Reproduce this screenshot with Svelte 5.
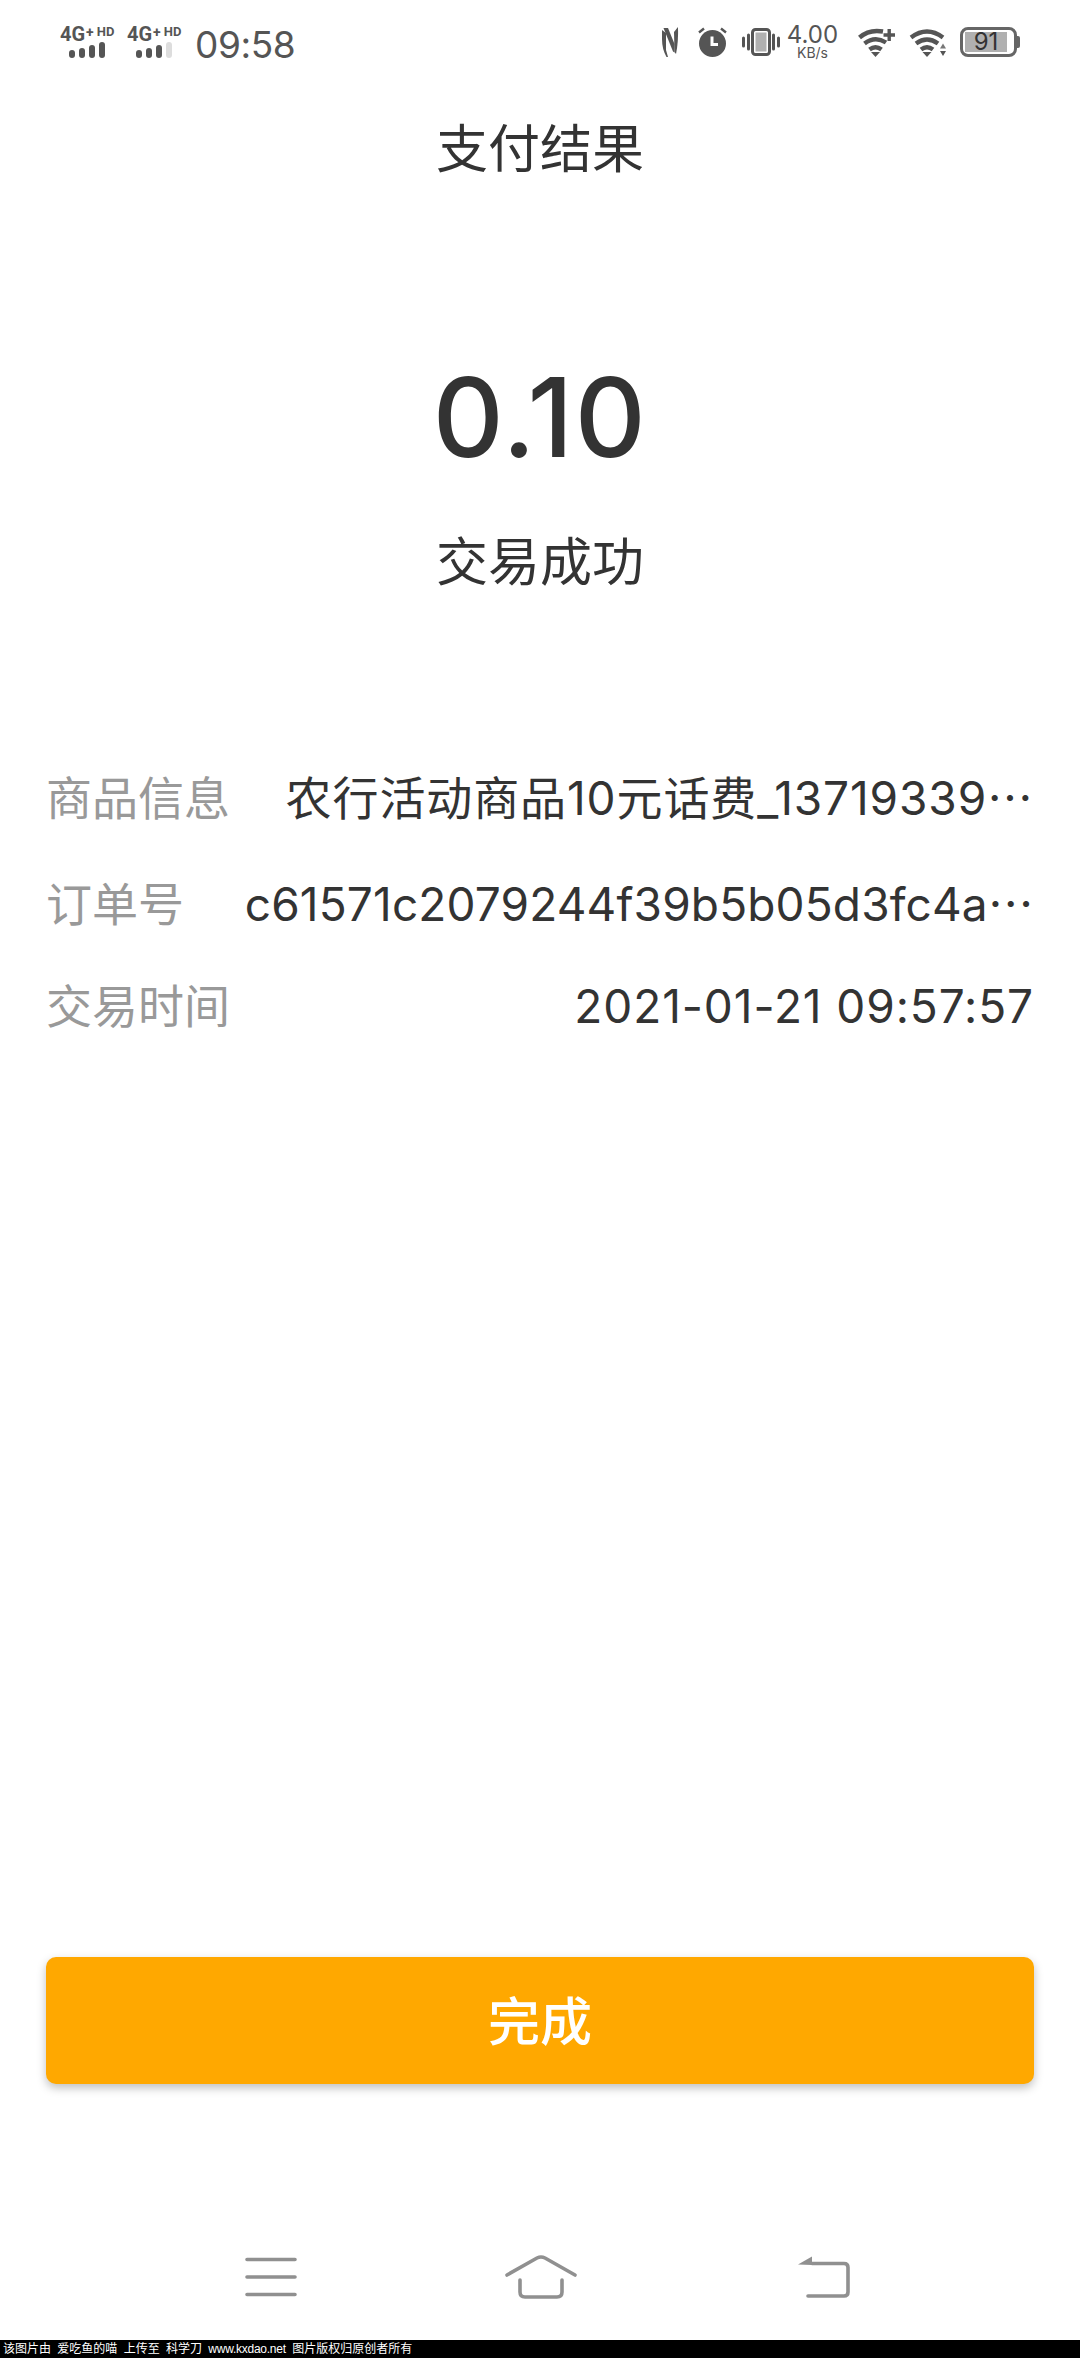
<script>
    const rows = [
        { label: '商品信息', value: '农行活动商品10元话费_13719339', more: true, wide: true },
        { label: '订单号', value: 'c61571c2079244f39b5b05d3fc4a', more: true, wide: false },
        { label: '交易时间', value: '2021-01-21 09:57:57', more: false, wide: true }
    ];
    const sims = [4, 3];
</script>

<div class="page">
    <div class="status-bar">
        <div class="status-left">
            {#each sims as level}
                <div class="sim">
                    <div class="sim-label"><span class="net">4G</span><span class="plus">+</span><span class="hd">HD</span></div>
                    <div class="bars">
                        {#each [8, 10, 13, 16] as h, i}
                            <i class="bar" class:off={i >= level} style="height: {h}px"></i>
                        {/each}
                    </div>
                </div>
            {/each}
            <span class="time">09:58</span>
        </div>
        <div class="status-right">
            <svg class="ic-nfc" width="18" height="30" viewBox="0 0 18 30" fill="#555">
                <path d="M1 3L5 6V23L7 30H5.500Q1 22 1 12Z" />
                <path d="M2.500 1H7L13.500 17V25.500L12 24.500Z" />
                <path d="M13 5L17 0Q17.500 15 15 27L13.500 25Z" />
            </svg>
            <svg class="ic-alarm" width="29" height="30" viewBox="0 0 29 30">
                <circle cx="14.500" cy="16.500" r="13.500" fill="#555" />
                <path d="M1 5.500L6 1.500M28 5.500L23 1.500" stroke="#555" stroke-width="2.400" fill="none" />
                <path d="M14 9.500V17.500H20" stroke="#fff" stroke-width="3" fill="none" />
            </svg>
            <svg class="ic-vibrate" width="38" height="28" viewBox="0 0 38 28">
                <rect x="10.500" y="1.500" width="17" height="25" rx="3" fill="#fff" stroke="#555" stroke-width="3" />
                <rect x="13.500" y="4.500" width="11" height="19" fill="#b0b0b0" />
                <path d="M1.500 10V18M6.500 7V21M31.500 7V21M36.500 10V18" stroke="#555" stroke-width="3" stroke-linecap="round" />
            </svg>
            <div class="speed">
                <span class="speed-num">4.00</span>
                <span class="speed-unit">KB/s</span>
            </div>
            <svg class="ic-wifi" width="37" height="29" viewBox="0 0 37 29" fill="none" stroke="#555" stroke-width="4.400">
                <path d="M1.500 9.500Q11 1 25 3.500" />
                <path d="M6.500 15.500Q17 7.500 28 14.500" />
                <path d="M11.500 21.500Q17.500 17 23.500 21.500" />
                <path d="M13 24L17.500 29L22 24Z" fill="#555" stroke="none" />
                <path d="M25.500 7H37M31.200 1V13" stroke-width="3.400" />
            </svg>
            <svg class="ic-wifi2" width="37" height="29" viewBox="0 0 37 29" fill="none" stroke="#555" stroke-width="4.400">
                <path d="M2 9.500Q18 -2.500 34 9.500" />
                <path d="M7 15.500Q18 7.500 29 15.500" />
                <path d="M12 21.500Q18 17 24 21.500" />
                <path d="M13.500 24L18 29L22.500 24Z" fill="#555" stroke="none" />
                <path d="M31 20.500L34 15.500L37 20.500Z" fill="#777" stroke="none" />
                <path d="M31 23L34 28L37 23Z" fill="#555" stroke="none" />
            </svg>
            <div class="battery"><div class="battery-fill">91</div></div>
        </div>
    </div>

    <h1 class="title">支付结果</h1>

    <div class="result">
        <div class="amount">0.10</div>
        <div class="state">交易成功</div>
    </div>

    <div class="info">
        {#each rows as row}
            <div class="row">
                <span class="label">{row.label}</span>
                <span class="value" class:wide={row.wide} class:loose={!row.wide}>{row.value}{#if row.more}<span class="more" lang="zh-CN">⋯</span>{/if}</span>
            </div>
        {/each}
    </div>

    <div class="done">完成</div>

    <nav class="nav">
        <svg class="nav-menu" width="52" height="40" viewBox="0 0 52 40" fill="none" stroke="#909090" stroke-width="3.600" stroke-linecap="round">
            <path d="M2 2.500H50M2 20H50M2 37.500H50" />
        </svg>
        <svg class="nav-home" width="72" height="44" viewBox="0 0 72 44" fill="none" stroke="#909090" stroke-width="3.600" stroke-linecap="round" stroke-linejoin="round">
            <path d="M2 20L32 3Q36 1 40 3L70 20" />
            <path d="M15 25V37Q15 42 20 42H52Q57 42 57 37V25" />
        </svg>
        <svg class="nav-back" width="52" height="42" viewBox="0 0 52 42" fill="none" stroke="#909090" stroke-width="3.600" stroke-linecap="round">
            <path d="M14 7.500H46Q50 7.500 50 11.500V36Q50 40 46 40H10" />
            <path d="M0 8.500L14 .5V9Z" fill="#909090" stroke="none" />
        </svg>
    </nav>

    <div class="watermark">该图片由 爱吃鱼的喵 上传至 科学刀 <span class="site">www.kxdao.net</span> 图片版权归原创者所有</div>
</div>

<style>
    :global(body) {
        background: #fff;
    }

    .page {
        width: 1080px;
        height: 2358px;
        display: flex;
        flex-direction: column;
        overflow: hidden;
        background: #fff;
        color: #333;
        font-family: Inter, "Noto Sans CJK SC", sans-serif;
    }

    .status-bar {
        height: 84px;
        flex: none;
        display: flex;
        justify-content: space-between;
        align-items: center;
        padding: 0 63px 0 60px;
        box-sizing: border-box;
        color: #555;
    }

    .status-left,
    .status-right {
        display: flex;
        align-items: center;
    }

    .sim {
        width: 55px;
        margin-right: 12px;
    }

    .sim-label {
        display: flex;
        align-items: flex-start;
        height: 15px;
        line-height: 15px;
        font-weight: 700;
        white-space: nowrap;
        font-family: Roboto, sans-serif;
    }

    .net {
        font-size: 20px;
    }

    .plus {
        font-size: 14px;
        line-height: 10px;
        margin-left: 1px;
    }

    .hd {
        font-size: 13px;
        line-height: 10px;
        margin-left: 3px;
    }

    .bars {
        display: flex;
        align-items: flex-end;
        gap: 4px;
        height: 16px;
        margin: 0 0 0 9px;
    }

    .bar {
        width: 6px;
        border-radius: 3px;
        background: #555;
    }

    .bar.off {
        background: #ddd;
    }

    .time {
        font-size: 37px;
        letter-spacing: -0.4px;
        margin-left: 1px;
        padding-top: 4px;
    }

    .ic-alarm {
        margin-left: 19px;
    }

    .ic-vibrate {
        margin-left: 15px;
    }

    .speed {
        margin-left: 7px;
        width: 51px;
        display: flex;
        flex-direction: column;
        align-items: center;
    }

    .speed-num {
        font-size: 24px;
        line-height: 22px;
    }

    .speed-unit {
        font-size: 14px;
        line-height: 14px;
    }

    .ic-wifi {
        margin-left: 20px;
    }

    .ic-wifi2 {
        margin-left: 14px;
    }

    .battery {
        position: relative;
        margin-left: 14px;
        width: 57px;
        height: 30px;
        box-sizing: border-box;
        border: 3px solid #666;
        border-radius: 8px;
        padding: 2px;
    }

    .battery::after {
        content: '';
        position: absolute;
        right: -6px;
        top: 6px;
        width: 3px;
        height: 12px;
        border-radius: 0 2px 2px 0;
        background: #666;
    }

    .battery-fill {
        width: 42px;
        height: 20px;
        line-height: 20px;
        background: #b0b0b0;
        color: #333;
        font-size: 24px;
        text-align: center;
    }

    .title {
        flex: none;
        margin: 0;
        height: 132px;
        line-height: 132px;
        text-align: center;
        font-size: 52px;
        font-weight: 400;
    }

    .result {
        flex: none;
        text-align: center;
        padding-top: 136px;
    }

    .amount {
        font-size: 110px;
        line-height: 130px;
        font-weight: 500;
        letter-spacing: 1.500px;
    }

    .state {
        font-size: 52px;
        line-height: 70px;
        margin-top: 46px;
    }

    .info {
        flex: none;
        padding: 145px 46px 0;
    }

    .row {
        display: flex;
        justify-content: space-between;
        align-items: baseline;
        height: 105.500px;
        line-height: 105px;
        font-size: 46px;
        white-space: nowrap;
    }

    .label {
        color: #999;
    }

    .value.wide {
        letter-spacing: 0.9px;
    }

    .value.loose {
        letter-spacing: 0.15px;
    }

    .more {
        display: inline-block;
        font-family: "Noto Sans CJK SC", sans-serif;
    }

    .done {
        flex: none;
        margin: auto 46px 0;
        height: 127px;
        box-sizing: border-box;
        padding-top: 4px;
        line-height: 123px;
        border-radius: 10px;
        background: #ffa800;
        color: #fff;
        text-align: center;
        font-size: 52px;
        font-weight: 500;
        box-shadow: 0 4px 10px rgba(0, 0, 0, 0.25);
    }

    .nav {
        flex: none;
        display: flex;
        align-items: center;
        height: 44px;
        margin: 171px 0 41px;
        padding-left: 245px;
    }

    .nav-home {
        margin-left: 208px;
    }

    .nav-back {
        margin-left: 221px;
    }

    .watermark {
        flex: none;
        height: 18px;
        line-height: 18px;
        padding-left: 3px;
        background: #000;
        color: #fff;
        font-size: 12px;
        white-space: pre;
        word-spacing: 3px;
        font-family: "Liberation Sans", "Noto Sans CJK SC", sans-serif;
    }

    .site {
        letter-spacing: -0.25px;
    }
</style>
